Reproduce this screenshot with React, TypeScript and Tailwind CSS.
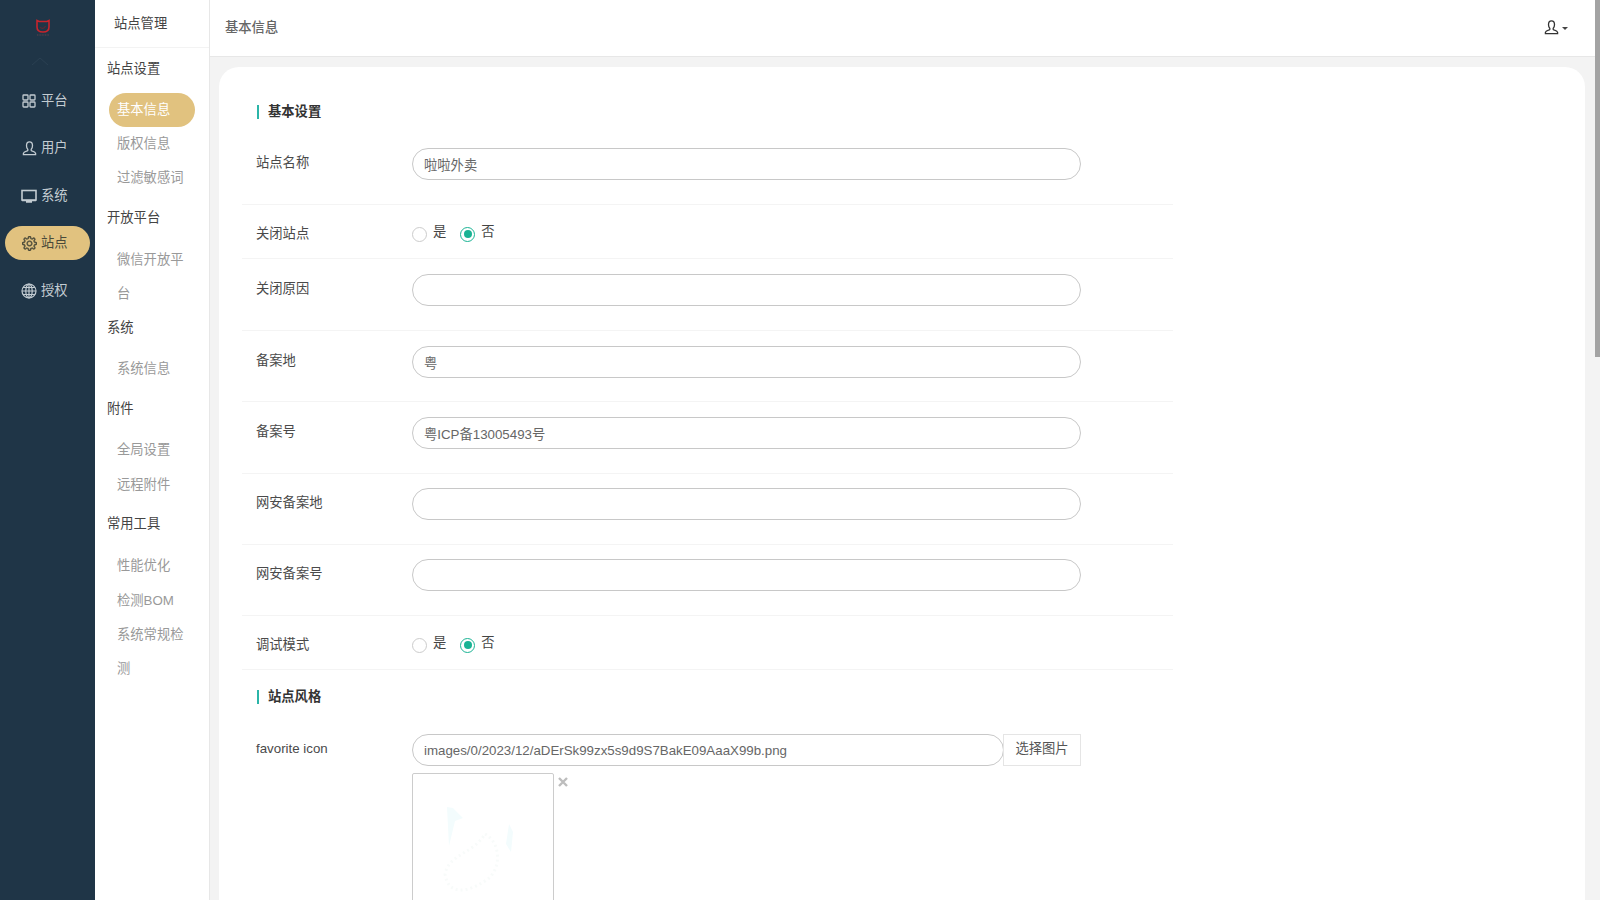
import { ReactNode } from "react";
import { SlSettings } from "react-icons/sl";

function UserIcon({ size = 15 }: { size?: number }) {
  return (
    <svg width={size} height={size} viewBox="0 0 16 16" fill="none" stroke="currentColor" strokeWidth="1.4">
      <path d="M8 1 C5.8 1 4.8 2.8 4.8 5 C4.8 6.8 5.6 8.2 6.2 9 V10 C6.2 10.8 2 11 1.5 13.2 V14.5 H14.5 V13.2 C14 11 9.8 10.8 9.8 10 V9 C10.4 8.2 11.2 6.8 11.2 5 C11.2 2.8 10.2 1 8 1Z" />
    </svg>
  );
}

function NavItem({ icon, label, active }: { icon: ReactNode; label: string; active?: boolean }) {
  return (
    <div
      className={`mx-[5px] flex h-[34px] items-center gap-[4px] rounded-[17px] pl-[16px] text-[13.3px] ${
        active ? "bg-[#e1c27f] text-[#4a4a3a]" : "text-[#c3ccd2]"
      }`}
    >
      <span className="flex w-[16px] items-center justify-center">{icon}</span>
      <span>{label}</span>
    </div>
  );
}

function Title({ children, mt = "" }: { children: string; mt?: string }) {
  return <div className={`flex h-[34px] items-center pl-[12px] text-[#444] ${mt}`}>{children}</div>;
}

function Sub({ children, active, mt = "" }: { children: string; active?: boolean; mt?: string }) {
  return (
    <div
      className={`ml-[14px] w-[86px] rounded-[17px] px-[8px] leading-[34px] ${mt} ${
        active ? "bg-[#e1c27f] text-white" : "text-[#999]"
      }`}
    >
      {children}
    </div>
  );
}

function TextInput({ value = "", className = "w-[669px]" }: { value?: string; className?: string }) {
  return (
    <input
      readOnly
      value={value}
      className={`h-[32px] rounded-[16px] border border-[#c8c8c8] bg-white px-[11px] text-[13.3px] text-[#666] outline-none ${className}`}
    />
  );
}

function Row({ label, value, top, bottom }: { label: string; value?: string; top: string; bottom: string }) {
  return (
    <div className={`flex w-[931px] border-b border-[#f4f4f4] pl-[14px] ${top} ${bottom}`}>
      <div className="w-[156px] pt-[5px] leading-[20px] text-[#4a4a4a]">{label}</div>
      <TextInput value={value} />
    </div>
  );
}

function RadioDot({ checked }: { checked?: boolean }) {
  return (
    <span
      className={`flex h-[15px] w-[15px] items-center justify-center rounded-full border bg-white ${
        checked ? "border-[#1ab394]" : "border-[#ccc]"
      }`}
    >
      {checked && <span className="h-[8px] w-[8px] rounded-full bg-[#1ab394]" />}
    </span>
  );
}

function RadioRow({ label, height }: { label: string; height: string }) {
  return (
    <div className={`flex w-[931px] items-center border-b border-[#f4f4f4] pl-[14px] ${height}`}>
      <div className="w-[156px] leading-[20px] text-[#4a4a4a]">{label}</div>
      <RadioDot />
      <span className="ml-[6px] mr-[14px] -translate-y-[2px] text-[#444]">是</span>
      <RadioDot checked />
      <span className="ml-[6px] -translate-y-[2px] text-[#444]">否</span>
    </div>
  );
}

function Heading({ children, className }: { children: string; className: string }) {
  return (
    <div className={`ml-[15px] flex h-[20px] items-center gap-[9px] font-bold text-[#333] ${className}`}>
      <span className="h-[14px] w-[2px] bg-[#2bb5a8]" />
      {children}
    </div>
  );
}

export default function App() {
  return (
    <div className="relative flex h-[900px] w-[1600px] overflow-hidden bg-[#f3f3f3] font-['Liberation_Sans','Noto_Sans_CJK_SC',sans-serif] text-[13.3px]">
      {/* main nav */}
      <aside className="flex w-[95px] shrink-0 flex-col bg-[#1f3547]">
        <div className="flex h-[84px] flex-col items-center pt-[19px]">
          <svg width="16" height="18" viewBox="0 0 16 18" fill="none" className="ml-[-9px]">
            <path d="M2 1.5 L4 2.5 H12 L14 1.5 V8 C14 11.5 11.5 13 8 13 C4.5 13 2 11.5 2 8 Z" stroke="#c8242c" strokeWidth="1.6" />
            <path d="M5 8 C6.5 10 9 10 10.5 7" stroke="#5a2a35" strokeWidth="1.2" />
            <path d="M2 16 H14" stroke="#4a3f4b" strokeWidth="1.4" strokeDasharray="1 0.6" />
          </svg>
          <svg width="26" height="10" viewBox="0 0 26 10" fill="none" className="ml-[-8px] mt-[19px]">
            <path d="M1 9 L9 2 L17 9" stroke="#2a4052" strokeWidth="1" />
          </svg>
        </div>
        <div className="flex flex-col gap-[13.4px]">
          <NavItem
            icon={
              <svg width="14" height="14" viewBox="0 0 14 14" fill="none" stroke="currentColor" strokeWidth="1.3">
                <rect x="1" y="1" width="5" height="5" rx="0.8" />
                <rect x="8" y="1" width="5" height="5" rx="0.8" />
                <rect x="1" y="8" width="5" height="5" rx="0.8" />
                <rect x="8" y="8" width="5" height="5" rx="0.8" />
              </svg>
            }
            label="平台"
          />
          <NavItem icon={<UserIcon />} label="用户" />
          <NavItem
            icon={
              <svg width="16" height="14" viewBox="0 0 16 14" fill="none">
                <rect x="1" y="1.5" width="14" height="9.5" stroke="currentColor" strokeWidth="1.6" />
                <path d="M1 11.6 H15 M5 13 H11" stroke="currentColor" strokeWidth="1.3" />
              </svg>
            }
            label="系统"
          />
          <NavItem icon={<SlSettings size={15} stroke="currentColor" strokeWidth={30} />} label="站点" active />
          <NavItem
            icon={
              <svg width="16" height="16" viewBox="0 0 16 16" fill="none" stroke="currentColor" strokeWidth="1.2">
                <circle cx="8" cy="8" r="7" />
                <ellipse cx="8" cy="8" rx="3.2" ry="7" />
                <path d="M8 1 V15 M1 8 H15 M2 4.5 H14 M2 11.5 H14" />
              </svg>
            }
            label="授权"
          />
        </div>
      </aside>

      {/* sub nav */}
      <aside className="w-[115px] shrink-0 border-r border-[#e7e7e7] bg-white">
        <div className="flex h-[48px] items-center border-b border-[#f3f3f3] pl-[19px] text-[#444]">站点管理</div>
        <div className="pt-[4px]">
          <Title>站点设置</Title>
          <div className="mt-[7px]" />
          <Sub active>基本信息</Sub>
          <Sub>版权信息</Sub>
          <Sub>过滤敏感词</Sub>
          <Title mt="mt-[6px]">开放平台</Title>
          <div className="mt-[8px]" />
          <Sub>微信开放平台</Sub>
          <Title>系统</Title>
          <div className="mt-[7px]" />
          <Sub>系统信息</Sub>
          <Title mt="mt-[6px]">附件</Title>
          <div className="mt-[7px]" />
          <Sub>全局设置</Sub>
          <Sub mt="mt-[1px]">远程附件</Sub>
          <Title mt="mt-[5px]">常用工具</Title>
          <div className="mt-[8px]" />
          <Sub>性能优化</Sub>
          <Sub mt="mt-[1px]">检测BOM</Sub>
          <Sub>系统常规检测</Sub>
        </div>
      </aside>

      {/* main */}
      <main className="flex min-w-0 flex-1 flex-col">
        <header className="flex h-[57px] shrink-0 items-center justify-between border-b border-[#e7e7e7] bg-white pl-[15px] pr-[32px]">
          <span className="-mt-[1px] font-medium text-[#666]">基本信息</span>
          <span className="-mt-[2px] flex items-center gap-[3px] text-[#333]">
            <UserIcon size={15} />
            <span className="mt-[3px] h-0 w-0 border-x-[3px] border-t-[3px] border-x-transparent border-t-[#444]" />
          </span>
        </header>
        <div className="ml-[9px] mt-[10px] h-[900px] w-[1366px] rounded-t-[20px] bg-white pl-[23px] pt-[35px]">
          <Heading className="mb-[26px]">基本设置</Heading>
          <Row label="站点名称" value="啦啦外卖" top="" bottom="pb-[24px]" />
          <RadioRow label="关闭站点" height="h-[54px] pt-[5px]" />
          <Row label="关闭原因" top="pt-[15px]" bottom="pb-[24px]" />
          <Row label="备案地" value="粤" top="pt-[15px]" bottom="pb-[23px]" />
          <Row label="备案号" value="粤ICP备13005493号" top="pt-[15px]" bottom="pb-[24px]" />
          <Row label="网安备案地" top="pt-[14px]" bottom="pb-[24px]" />
          <Row label="网安备案号" top="pt-[14px]" bottom="pb-[24px]" />
          <RadioRow label="调试模式" height="h-[54px] pt-[5px]" />
          <Heading className="mb-[27px] mt-[17px]">站点风格</Heading>
          <div className="flex w-[931px] pl-[14px]">
            <div className="w-[156px] pt-[5px] leading-[20px] text-[#4a4a4a]">favorite icon</div>
            <div className="w-[669px]">
              <div className="flex">
                <TextInput value="images/0/2023/12/aDErSk99zx5s9d9S7BakE09AaaX99b.png" className="w-[592px]" />
                <div className="-ml-px flex h-[32px] w-[78px] items-center justify-center border border-[#e5e5e5] pb-[3px] text-[#555]">选择图片</div>
              </div>
              <div className="relative mt-[7px] h-[141px] w-[142px] rounded-[2px] border border-[#ccc]">
                <svg width="139" height="139" viewBox="0 0 139 139" fill="none">
                  <path d="M34 33 L40 34 L50 44 L42 47 L36 72 Z" fill="#f3fcfd" />
                  <path d="M96 50 L100 58 L98 78 L93 70 Z" fill="#f3fcfd" />
                  <path d="M72 60 C90 70 88 100 70 108 C55 118 35 122 32 100 C36 80 60 80 72 60 Z" stroke="#f8fbfa" strokeWidth="3" strokeDasharray="2 3" />
                </svg>
                <span className="absolute left-[145px] top-[3px] flex h-[10px] w-[10px]">
                  <svg width="10" height="10" viewBox="0 0 10 10" fill="none">
                    <path d="M1 1 L9 9 M9 1 L1 9" stroke="#bdbdbd" strokeWidth="2.4" />
                  </svg>
                </span>
              </div>
            </div>
          </div>
        </div>
      </main>

      {/* scrollbar */}
      <div className="absolute right-0 top-0 h-[357px] w-[5px] bg-[#a3a3a3]" />
    </div>
  );
}
